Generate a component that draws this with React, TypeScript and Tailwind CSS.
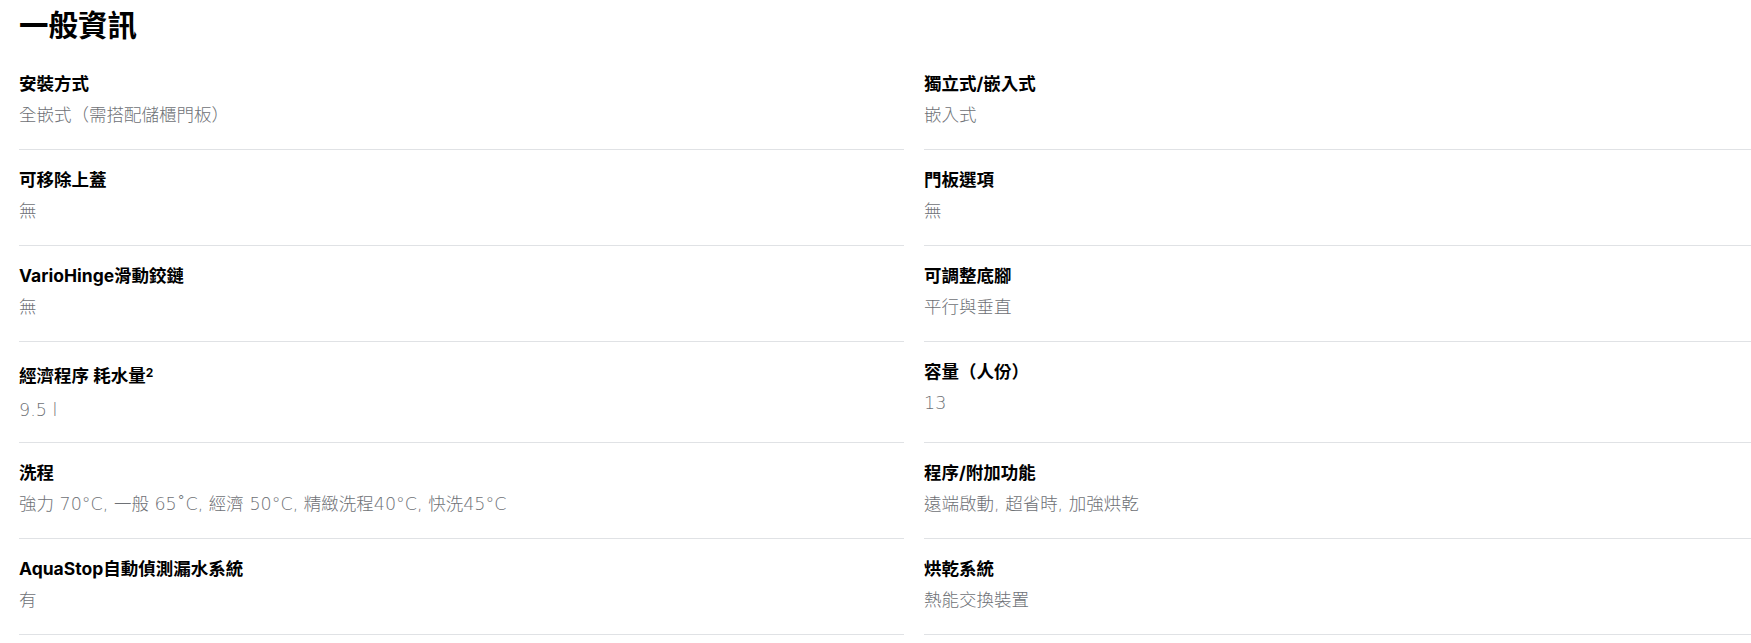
import type { ReactNode } from "react";

type Spec = {
  label: ReactNode;
  value: string;
  tall?: boolean;
};

const specs: Spec[] = [
  { label: "安裝方式", value: "全嵌式（需搭配儲櫃門板）" },
  { label: "獨立式/嵌入式", value: "嵌入式" },
  { label: "可移除上蓋", value: "無" },
  { label: "門板選項", value: "無" },
  { label: "VarioHinge滑動鉸鏈", value: "無" },
  { label: "可調整底腳", value: "平行與垂直" },
  {
    label: (
      <>
        經濟程序 耗水量
        <sup className="relative -top-[0.45em] align-baseline text-[12px] font-bold leading-none">
          2
        </sup>
      </>
    ),
    value: "9.5 l",
    tall: true,
  },
  { label: "容量（人份）", value: "13" },
  {
    label: "洗程",
    value: "強力 70°C, 一般 65˚C, 經濟 50°C, 精緻洗程40°C, 快洗45°C",
  },
  { label: "程序/附加功能", value: "遠端啟動, 超省時, 加強烘乾" },
  { label: "AquaStop自動偵測漏水系統", value: "有" },
  { label: "烘乾系統", value: "熱能交換裝置" },
];

function SpecItem({ spec }: { spec: Spec }) {
  return (
    <div
      className={
        spec.tall
          ? "border-b border-[#e0e2e5] pt-[22px] pb-[20px]"
          : "border-b border-[#e0e2e5] pt-[18px] pb-[22px]"
      }
    >
      <p className="font-['Inter','Noto_Sans_CJK_TC',sans-serif] text-[17.5px] font-bold leading-[24px] text-black">
        {spec.label}
      </p>
      <p
        className={
          spec.tall
            ? "mt-[10px] font-['DejaVu_Sans','Noto_Sans_CJK_TC',sans-serif] text-[17.5px] font-light leading-[24px] text-[#6e7176]"
            : "mt-[7px] font-['DejaVu_Sans','Noto_Sans_CJK_TC',sans-serif] text-[17.5px] font-light leading-[24px] text-[#6e7176]"
        }
      >
        {spec.value}
      </p>
    </div>
  );
}

export default function App() {
  return (
    <div className="min-h-screen overflow-hidden bg-white pl-[19px] pt-[7px] font-['Noto_Sans','Noto_Sans_CJK_TC',sans-serif]">
      <h2 className="mb-[11px] text-[29.5px] font-bold leading-[36px] text-black">
        一般資訊
      </h2>

      <div className="grid w-[1790px] grid-cols-[885px_885px] gap-x-5">
        {specs.map((spec, i) => (
          <SpecItem key={i} spec={spec} />
        ))}
      </div>
    </div>
  );
}
